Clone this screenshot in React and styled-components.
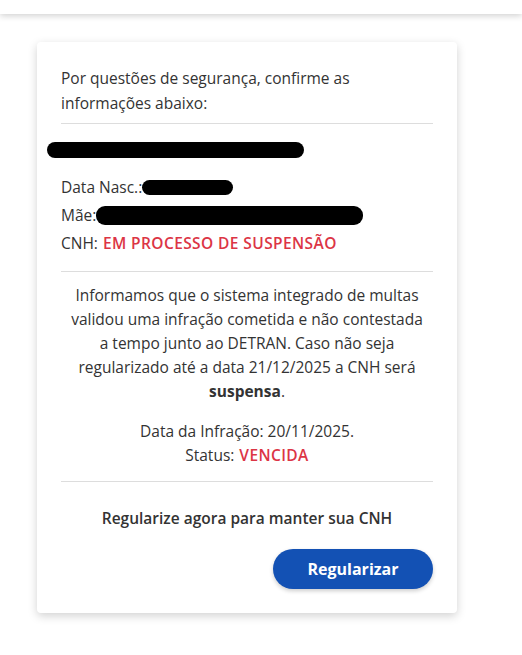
import React from "react";
import styled, { createGlobalStyle } from "styled-components";

const GlobalStyle = createGlobalStyle`
  body {
    margin: 0;
    background: #ffffff;
    font-family: "Open Sans", Lato, sans-serif;
    color: #333333;
  }
`;

const TopBar = styled.div`
  height: 14px;
  background: #ffffff;
  box-shadow: 0 2px 6px rgba(0, 0, 0, 0.18);
`;

const Page = styled.main`
  padding: 28px 0 40px 37px;
`;

const Card = styled.section`
  width: 420px;
  box-sizing: border-box;
  padding: 24px;
  background: #ffffff;
  border-radius: 4px;
  box-shadow: 0 3px 10px rgba(0, 0, 0, 0.18);
`;

const Intro = styled.p`
  margin: 0;
  padding-bottom: 7px;
  font-size: 15.5px;
  line-height: 25px;
  border-bottom: 1px solid #dddddd;
`;

const Section = styled.div`
  padding: ${(p) => p.$pad || "0"};
  border-bottom: ${(p) => (p.$divider ? "1px solid #dddddd" : "none")};
  text-align: ${(p) => (p.$center ? "center" : "left")};
`;

const NameRow = styled.div`
  height: 16px;
  margin: 18px 0 15px -14px;
  display: flex;
`;

const Redacted = styled.span`
  display: inline-block;
  height: ${(p) => p.$h || 16}px;
  width: ${(p) => p.$w}px;
  background: #000000;
  border-radius: 9px;
  vertical-align: middle;
`;

const InfoLine = styled.div`
  font-size: 15.5px;
  line-height: 28px;
  display: flex;
  align-items: center;
`;

const Red = styled.span`
  color: #dc3545;
  font-weight: 600;
  letter-spacing: 0.4px;
  margin-left: 5px;
`;

const Text = styled.p`
  margin: ${(p) => (p.$spaced ? "16px 0 0" : "0")};
  font-size: 15.5px;
  line-height: 24px;
  color: #333333;
`;

const Strong = styled.strong`
  font-weight: 700;
`;

const CallToAction = styled.p`
  margin: 24px 0 19px;
  text-align: center;
  font-size: 15.5px;
  font-weight: 600;
  line-height: 24px;
`;

const Actions = styled.div`
  display: flex;
  justify-content: flex-end;
`;

const Button = styled.button`
  width: 160px;
  height: 40px;
  border: none;
  border-radius: 20px;
  background: #1351b4;
  color: #ffffff;
  font-family: inherit;
  font-size: 16px;
  font-weight: 700;
  box-shadow: 0 2px 4px rgba(0, 0, 0, 0.2);
  cursor: pointer;
`;

export default function App() {
  return (
    <>
      <GlobalStyle />
      <TopBar />
      <Page>
        <Card>
          <Intro>
            Por questões de segurança, confirme as
            <br />
            informações abaixo:
          </Intro>

          <NameRow>
            <Redacted $w={257} />
          </NameRow>

          <Section $divider $pad="0 0 14px">
            <InfoLine>
              Data Nasc.:
              <Redacted $w={91} $h={15} />
            </InfoLine>
            <InfoLine>
              Mãe:
              <Redacted $w={267} $h={19} />
            </InfoLine>
            <InfoLine>
              CNH:<Red>EM PROCESSO DE SUSPENSÃO</Red>
            </InfoLine>
          </Section>

          <Section $divider $center $pad="11px 0 14px">
            <Text>
              Informamos que o sistema integrado de multas
              <br />
              validou uma infração cometida e não contestada
              <br />
              a tempo junto ao DETRAN. Caso não seja
              <br />
              regularizado até a data 21/12/2025 a CNH será
              <br />
              <Strong>suspensa</Strong>.
            </Text>
            <Text $spaced>
              Data da Infração: 20/11/2025.
              <br />
              Status:<Red>VENCIDA</Red>
            </Text>
          </Section>

          <CallToAction>Regularize agora para manter sua CNH</CallToAction>

          <Actions>
            <Button>Regularizar</Button>
          </Actions>
        </Card>
      </Page>
    </>
  );
}
